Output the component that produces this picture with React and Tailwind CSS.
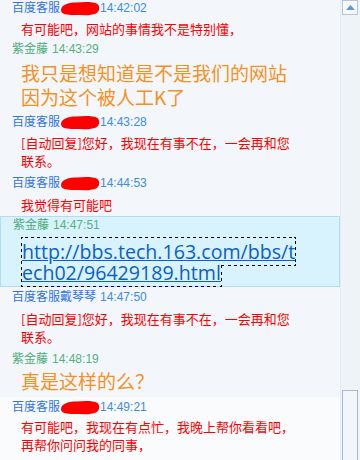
import React from "react";

const cjk = { fontFamily: '"Noto Sans CJK SC", "Liberation Sans", sans-serif' };
const mixed = { fontFamily: '"Liberation Sans", "Noto Sans CJK SC", sans-serif' };

function Blob() {
  return (
    <svg width="40" height="15" viewBox="0 0 40 15" className="shrink-0">
      <path
        d="M1 9 C1 4 8 1.5 16 1.5 C24 1 33 0.5 37.5 3 C40 5 40 10.5 36 12.5 C31 15 22 14 14 14 C7 14 1 13.5 1 9 Z"
        fill="#ff0000"
      />
    </svg>
  );
}

function Header({ name, time, green, hidden }) {
  const c = green ? "text-[#4eab78]" : "text-[#2f73e6]";
  const t = green ? "text-[#55b07f]" : "text-[#3a8ce8]";
  return (
    <div className="flex items-center h-[16px] pl-[12px] text-[12px] leading-[16px] whitespace-nowrap" style={mixed}>
      <span className={c}>{name}</span>
      {hidden ? <Blob /> : null}
      <span className={t + (hidden ? "" : " ml-[4px]")}>{time}</span>
    </div>
  );
}

function Msg({ lines, big }) {
  return (
    <div
      className={
        "pl-[21px] whitespace-nowrap " +
        (big ? "text-[19px] leading-[24px] text-[#f7901e]" : "text-[13px] leading-[18px] text-[#ff0000]")
      }
      style={cjk}
    >
      {lines.map((l, i) => (
        <div key={i}>{l}</div>
      ))}
    </div>
  );
}

export default function App() {
  return (
    <div className="w-[360px] h-[460px] flex overflow-hidden bg-[#f3f7fb]">
      <div className="w-[340px] flex flex-col">
        <div className="pb-[3px]">
          <Header name="百度客服" time="14:42:02" hidden />
          <div className="mt-[4px]">
            <Msg lines={["有可能吧，网站的事情我不是特别懂，"]} />
          </div>
        </div>
        <div className="pb-[5px]">
          <Header name="紫金藤" time="14:43:29" green />
          <div className="mt-[4px]">
            <Msg big lines={["我只是想知道是不是我们的网站", "因为这个被人工K了"]} />
          </div>
        </div>
        <div className="pb-[5px]">
          <Header name="百度客服" time="14:43:28" hidden />
          <div className="mt-[4px]">
            <Msg lines={["[自动回复]您好，我现在有事不在，一会再和您", "联系。"]} />
          </div>
        </div>
        <div className="pb-[2px]">
          <Header name="百度客服" time="14:44:53" hidden />
          <div className="mt-[5px]">
            <Msg lines={["我觉得有可能吧"]} />
          </div>
        </div>
        <div className="border border-[#b3dcf0] bg-[#d8f3fd] pb-[3px]">
          <Header name="紫金藤" time="14:47:51" green />
          <div className="mt-[8px] pl-[21px] text-[19.6px] leading-[21px] whitespace-nowrap" style={{ fontFamily: '"Open Sans", "Liberation Sans", sans-serif' }}>
            <a className="text-[#0b5fc9] underline outline-1 outline-dotted outline-black" href="#">
              http://bbs.tech.163.com/bbs/t
              <br />
              ech02/96429189.html
            </a>
          </div>
        </div>
        <div className="pt-[2px] pb-[5px]">
          <Header name="百度客服戴琴琴" time="14:47:50" />
          <div className="mt-[5px]">
            <Msg lines={["[自动回复]您好，我现在有事不在，一会再和您", "联系。"]} />
          </div>
        </div>
        <div className="pb-[4px]">
          <Header name="紫金藤" time="14:48:19" green />
          <div className="mt-[2px]">
            <Msg big lines={["真是这样的么？"]} />
          </div>
        </div>
        <div className="flex-1 bg-[#f9fbfd] pt-[2px]">
          <Header name="百度客服" time="14:49:21" hidden />
          <div className="mt-[3px]">
            <Msg lines={["有可能吧，我现在有点忙，我晚上帮你看看吧，", "再帮你问问我的同事，"]} />
          </div>
        </div>
      </div>
      <div className="w-[20px] flex flex-col bg-[#eef3f8] border-l border-[#e6ecf3] pl-[1px] pr-[2px]">
        <div className="h-[15px] border border-[#b8c5d8] bg-[#f6f9fc] flex items-center justify-center">
          <svg width="9" height="5" viewBox="0 0 9 5">
            <path d="M4.5 0 L9 5 L0 5 Z" fill="#5d9ad6" />
          </svg>
        </div>
        <div className="flex-1" />
        <div className="h-[70px] border border-b-0 border-[#aab9d1] bg-[#f2f6fb]" />
      </div>
    </div>
  );
}
